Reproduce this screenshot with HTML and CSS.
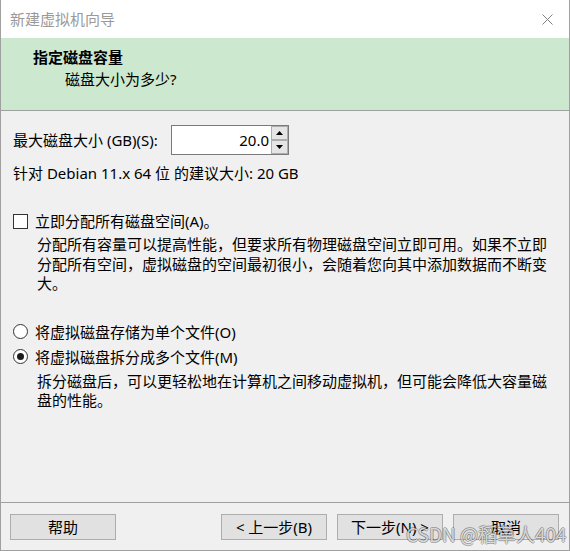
FILE: index.html
```html
<!DOCTYPE html>
<html lang="zh-CN">
<head>
<meta charset="utf-8">
<title>新建虚拟机向导</title>
<link rel="stylesheet" href="styles.css">
</head>
<body>
<div class="window">
  <div class="titlebar">
    <span class="title">新建虚拟机向导</span>
    <svg class="close" width="11" height="11" viewBox="0 0 11 11"><path d="M0.5 0.5 L10.5 10.5 M10.5 0.5 L0.5 10.5" stroke="#808080" stroke-width="1" fill="none"/></svg>
  </div>
  <div class="header">
    <div class="h-title">指定磁盘容量</div>
    <div class="h-sub">磁盘大小为多少?</div>
  </div>
  <div class="content">
    <div class="size-row">
      <span class="size-label">最大磁盘大小 (GB)(S):</span>
      <div class="spin-field">
        <div class="spin-value">20.0</div>
        <div class="spinner">
          <div class="spin-btn"><svg width="7" height="4" viewBox="0 0 7 4"><path d="M0 4 L3.5 0 L7 4 Z" fill="#000"/></svg></div>
          <div class="spin-btn"><svg width="7" height="4" viewBox="0 0 7 4"><path d="M0 0 L7 0 L3.5 4 Z" fill="#000"/></svg></div>
        </div>
      </div>
    </div>
    <div class="hint">针对 Debian 11.x 64 位 的建议大小: 20 GB</div>
    <div class="option check-row">
      <span class="checkbox"></span>
      <span>立即分配所有磁盘空间(A)。</span>
    </div>
    <div class="desc desc-alloc">分配所有容量可以提高性能，但要求所有物理磁盘空间立即可用。如果不立即<br>分配所有空间，虚拟磁盘的空间最初很小，会随着您向其中添加数据而不断变<br>大。</div>
    <div class="option radio-row first-radio">
      <span class="radio"></span>
      <span>将虚拟磁盘存储为单个文件(O)</span>
    </div>
    <div class="option radio-row second-radio">
      <span class="radio checked"></span>
      <span>将虚拟磁盘拆分成多个文件(M)</span>
    </div>
    <div class="desc desc-split">拆分磁盘后，可以更轻松地在计算机之间移动虚拟机，但可能会降低大容量磁<br>盘的性能。</div>
  </div>
  <div class="footer">
    <button class="btn">帮助</button>
    <span class="spacer"></span>
    <button class="btn">&lt; 上一步(B)</button>
    <button class="btn">下一步(N) &gt;</button>
    <button class="btn">取消</button>
  </div>
  <div class="watermark">CSDN @稻草人404</div>
</div>
</body>
</html>
```

FILE: styles.css
```css
html, body {
  margin: 0;
  padding: 0;
  background: #f0f0f0;
}
body {
  font-family: "Noto Sans", "Noto Sans CJK SC", sans-serif;
  font-size: 15px;
  line-height: 20px;
  color: #000;
}
.window {
  position: relative;
  width: 570px;
  height: 551px;
  box-sizing: border-box;
  border: 1px solid #a0a0a0;
  border-top: none;
  background: #f0f0f0;
  display: flex;
  flex-direction: column;
  overflow: hidden;
}
.titlebar {
  height: 38px;
  flex: none;
  background: #fff;
  display: flex;
  align-items: center;
  justify-content: space-between;
  padding: 0 16px 0 9px;
  color: #9a9a9a;
}
.close {
  display: block;
}
.header {
  height: 73px;
  flex: none;
  box-sizing: border-box;
  background: #cce8cf;
  border-bottom: 1px solid #a0a0a0;
  padding: 9px 0 0 32px;
}
.h-title {
  font-weight: 700;
}
.h-sub {
  margin: 2px 0 0 32px;
}
.content {
  flex: 1;
  padding: 14px 0 0 12px;
}
.size-row {
  display: flex;
  align-items: center;
  height: 30px;
}
.size-label {
  width: 158px;
}
.spin-field {
  width: 118px;
  height: 30px;
  box-sizing: border-box;
  border: 1px solid #7a7a7a;
  background: #fff;
  display: flex;
}
.spin-value {
  flex: 1;
  text-align: right;
  padding-right: 2px;
  line-height: 28px;
}
.spinner {
  width: 17px;
  display: flex;
  flex-direction: column;
}
.spin-btn {
  height: 14px;
  box-sizing: border-box;
  border: 1px solid #adadad;
  background: #e5e5e5;
  display: flex;
  align-items: center;
  justify-content: center;
}
.hint {
  margin-top: 8px;
}
.option {
  display: flex;
  align-items: center;
  gap: 7px;
}
.check-row {
  margin-top: 28px;
}
.checkbox {
  width: 15px;
  height: 15px;
  box-sizing: border-box;
  border: 1px solid #333;
  background: #fff;
}
.desc {
  padding-left: 24px;
  line-height: 19.5px;
}
.desc-alloc {
  margin-top: 4px;
}
.first-radio {
  margin-top: 28px;
}
.second-radio {
  margin-top: 5px;
}
.radio {
  width: 15px;
  height: 15px;
  box-sizing: border-box;
  border: 1px solid #333;
  border-radius: 50%;
  background: #fff;
  display: flex;
  align-items: center;
  justify-content: center;
}
.radio.checked::after {
  content: "";
  width: 7px;
  height: 7px;
  border-radius: 50%;
  background: #1a1a1a;
}
.desc-split {
  margin-top: 5px;
}
.footer {
  height: 48px;
  flex: none;
  box-sizing: border-box;
  border-top: 1px solid #a0a0a0;
  padding: 11px 10px 0 9px;
  display: flex;
  align-items: flex-start;
  gap: 10px;
}
.spacer {
  flex: 1;
}
.btn {
  width: 106px;
  height: 26px;
  box-sizing: border-box;
  border: 1px solid #adadad;
  background: #e1e1e1;
  font: inherit;
  color: #000;
  padding: 0;
  line-height: 22px;
}
.watermark {
  position: absolute;
  left: 405px;
  top: 522px;
  font-family: "Noto Sans CJK SC", sans-serif;
  font-size: 19px;
  line-height: 24px;
  color: rgba(255, 255, 255, 0.75);
  text-shadow: 1px 0 0 rgba(0, 0, 0, 0.28), -1px 0 0 rgba(0, 0, 0, 0.28), 0 1px 0 rgba(0, 0, 0, 0.28), 0 -1px 0 rgba(0, 0, 0, 0.28);
  white-space: nowrap;
  pointer-events: none;
}
```
